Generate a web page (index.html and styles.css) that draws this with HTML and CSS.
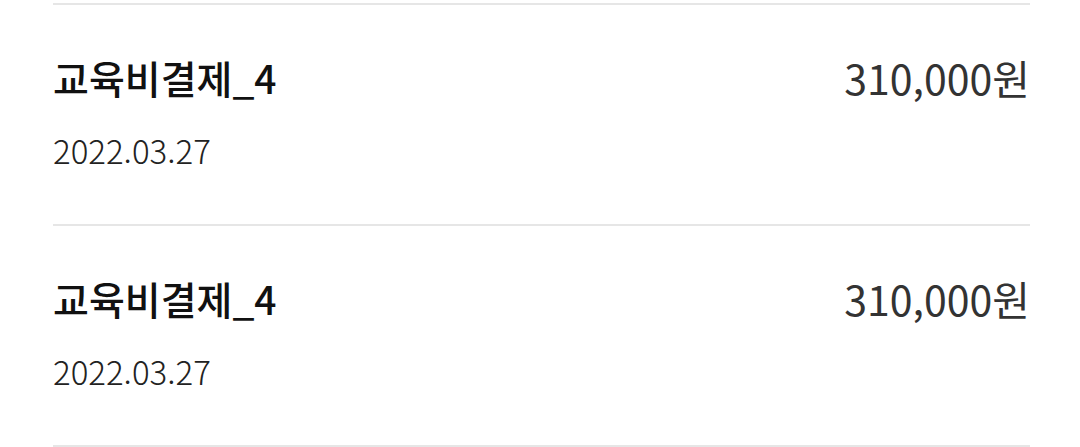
FILE: index.html
```html
<!DOCTYPE html>
<html lang="ko">
<head>
<meta charset="utf-8">
<link rel="stylesheet" href="styles.css">
</head>
<body>
<ul class="list">
  <li class="item">
    <div class="info">
      <p class="title">교육비결제_4</p>
      <p class="date">2022.03.27</p>
    </div>
    <p class="amount">310,000원</p>
  </li>
  <li class="item">
    <div class="info">
      <p class="title">교육비결제_4</p>
      <p class="date">2022.03.27</p>
    </div>
    <p class="amount">310,000원</p>
  </li>
</ul>
</body>
</html>
```
FILE: styles.css
```css
html, body {
  margin: 0;
  padding: 0;
  background: #fff;
}
body {
  font-family: "Noto Sans CJK KR", "Noto Sans", sans-serif;
}
.list {
  list-style: none;
  margin: 3px 50px 0 53px;
  padding: 0;
  border-top: 2px solid #e6e6e6;
}
.item {
  display: flex;
  justify-content: space-between;
  align-items: flex-start;
  height: 221px;
  box-sizing: border-box;
  padding-top: 47px;
  border-bottom: 2px solid #e6e6e6;
}
.info {
  display: flex;
  flex-direction: column;
  gap: 28px;
}
.title {
  margin: 0;
  font-size: 39px;
  line-height: 50px;
  font-weight: 500;
  color: #111;
}
.date {
  margin: 0;
  font-size: 33px;
  line-height: 40px;
  font-weight: 300;
  color: #222;
}
.amount {
  margin: 0;
  font-size: 41px;
  line-height: 50px;
  font-weight: 400;
  color: #333;
}
```
